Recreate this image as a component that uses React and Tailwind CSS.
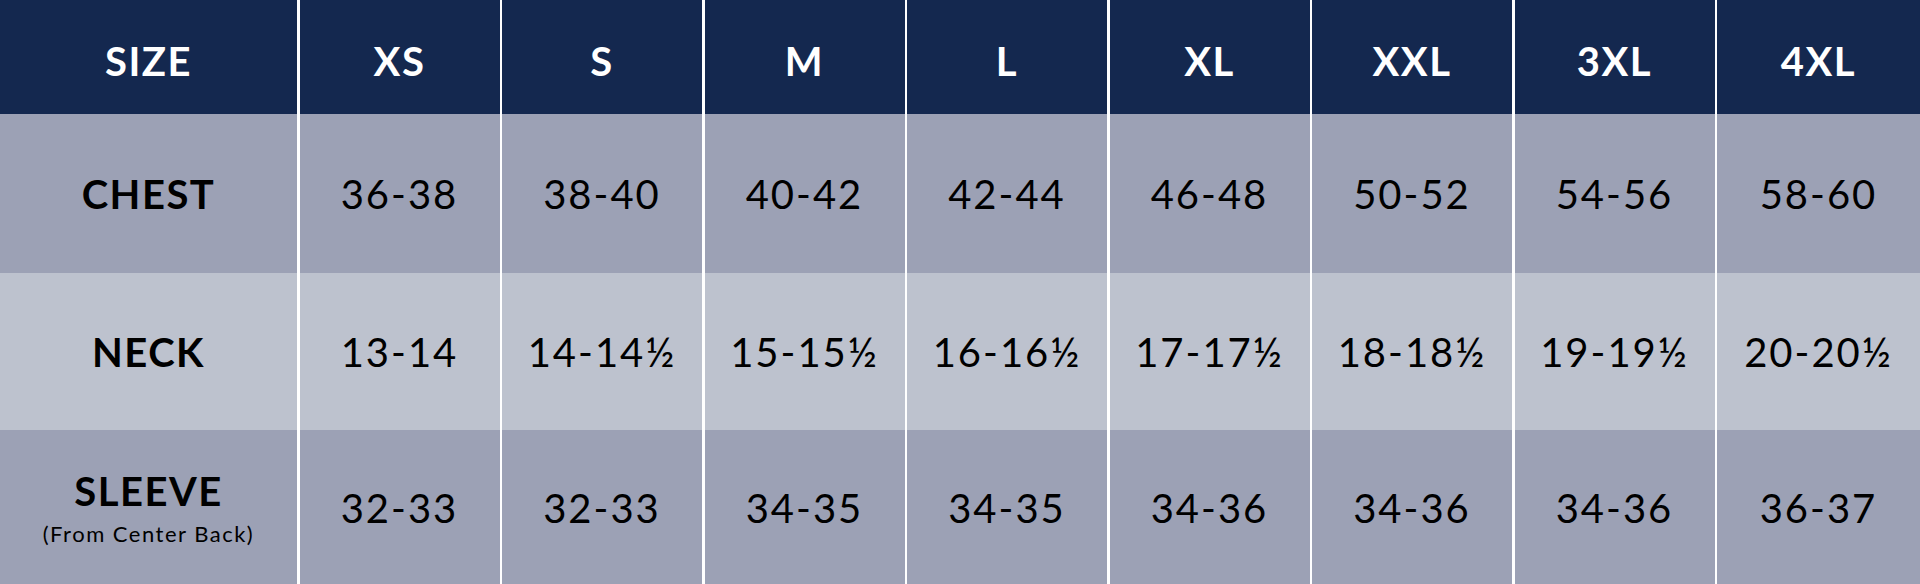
const sizes = ["XS", "S", "M", "L", "XL", "XXL", "3XL", "4XL"];

const rows = [
  {
    label: "CHEST",
    bg: "bg-[#9ca1b5]",
    h: "h-[159px]",
    values: ["36-38", "38-40", "40-42", "42-44", "46-48", "50-52", "54-56", "58-60"],
  },
  {
    label: "NECK",
    bg: "bg-[#bdc2ce]",
    h: "h-[157px]",
    values: ["13-14", "14-14½", "15-15½", "16-16½", "17-17½", "18-18½", "19-19½", "20-20½"],
  },
  {
    label: "SLEEVE",
    sub: "(From Center Back)",
    bg: "bg-[#9ca1b5]",
    h: "h-[155px]",
    values: ["32-33", "32-33", "34-35", "34-35", "34-36", "34-36", "34-36", "36-37"],
  },
];

export default function App() {
  return (
    <div className="w-[1920px] h-[584px] overflow-hidden bg-white font-['Lato','Liberation_Sans',sans-serif]">
      <div className="grid grid-cols-[297px_repeat(7,200px)_1fr] gap-x-[2.5px]">
        {/* header */}
        <div className="h-[114px] bg-[#14284f] flex items-center justify-center pt-2 text-white font-bold text-[40px] tracking-[1.5px]">
          SIZE
        </div>
        {sizes.map((s) => (
          <div
            key={s}
            className="h-[114px] bg-[#14284f] flex items-center justify-center pt-2 text-white font-bold text-[40px] tracking-[1.5px]"
          >
            {s}
          </div>
        ))}

        {rows.map((row) => (
          <>
            <div
              key={row.label}
              className={`${row.h} ${row.bg} flex flex-col items-center justify-center text-black`}
            >
              <span className="font-bold text-[40px] leading-none tracking-[1.5px]">{row.label}</span>
              {row.sub && (
                <span className="text-[22px] leading-none tracking-[1.5px] mt-3">{row.sub}</span>
              )}
            </div>
            {row.values.map((v, i) => (
              <div
                key={row.label + i}
                className={`${row.h} ${row.bg} flex items-center justify-center text-black text-[40px] tracking-[2px]`}
              >
                {v}
              </div>
            ))}
          </>
        ))}
      </div>
    </div>
  );
}
